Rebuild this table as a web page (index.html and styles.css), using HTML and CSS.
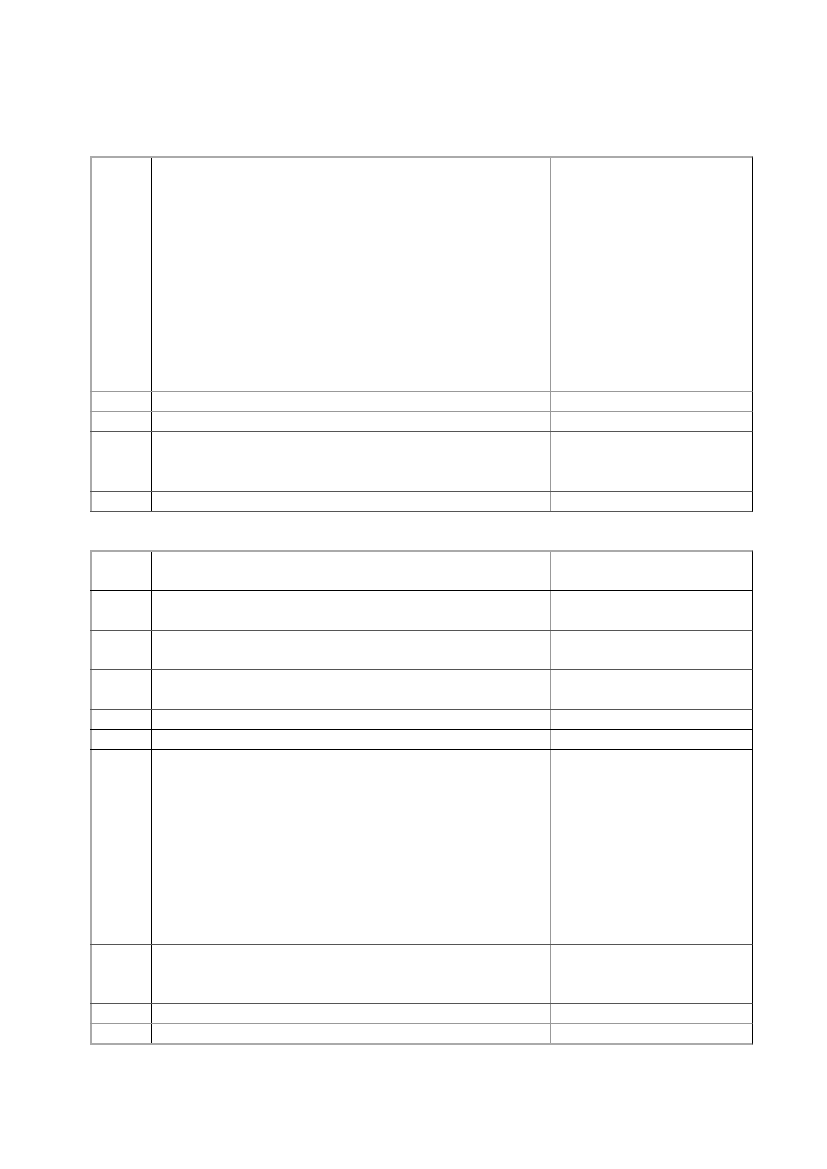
FILE: index.html
```html
<!DOCTYPE html>
<html>
<head>
<meta charset="utf-8">
<link rel="stylesheet" href="styles.css">
</head>
<body>
<div class="page">
  <div class="tbl">
    <div class="row first h233"><div class="c1"></div><div class="c2"></div><div class="c3"></div></div>
    <div class="row t-mid h19"><div class="c1"></div><div class="c2"></div><div class="c3"></div></div>
    <div class="row t-mid h19"><div class="c1"></div><div class="c2"></div><div class="c3"></div></div>
    <div class="row t-dark h59"><div class="c1"></div><div class="c2"></div><div class="c3"></div></div>
    <div class="row t-dark h19 b-dark"><div class="c1"></div><div class="c2"></div><div class="c3"></div></div>
  </div>
  <div class="tbl second">
    <div class="row first h38"><div class="c1"></div><div class="c2"></div><div class="c3"></div></div>
    <div class="row t-black h39"><div class="c1"></div><div class="c2"></div><div class="c3"></div></div>
    <div class="row t-dark h38"><div class="c1"></div><div class="c2"></div><div class="c3"></div></div>
    <div class="row t-dark h39"><div class="c1"></div><div class="c2"></div><div class="c3"></div></div>
    <div class="row t-dark h19"><div class="c1"></div><div class="c2"></div><div class="c3"></div></div>
    <div class="row t-black h19"><div class="c1"></div><div class="c2"></div><div class="c3"></div></div>
    <div class="row t-black h194"><div class="c1"></div><div class="c2"></div><div class="c3"></div></div>
    <div class="row t-dark h58"><div class="c1"></div><div class="c2"></div><div class="c3"></div></div>
    <div class="row t-dark h19"><div class="c1"></div><div class="c2"></div><div class="c3"></div></div>
    <div class="row t-mid h19 b-light"><div class="c1"></div><div class="c2"></div><div class="c3"></div></div>
  </div>
</div>
</body>
</html>
```
FILE: styles.css
```css
html, body {
  margin: 0;
  padding: 0;
  background: #ffffff;
  font-family: "Liberation Sans", Arial, sans-serif;
}
.page {
  width: 827px;
  height: 1169px;
  padding: 156px 0 0 90px;
  box-sizing: border-box;
}
.tbl {
  width: 663px;
  display: flex;
  flex-direction: column;
}
.tbl.second {
  margin-top: 38px;
}
.row {
  display: grid;
  grid-template-columns: 61px 399px 1fr;
  border-top: 1px solid #999;
  border-right: 1px solid #000;
}
.c1 { border-left: 2px solid #aaa; }
.c2 { border-left: 1px solid #000; }
.c3 { border-left: 1px solid #999; }
.first { border-top: 2px solid #aaa; }
.t-mid { border-top-color: #999; }
.t-dark { border-top-color: #555; }
.t-black { border-top-color: #000; }
.b-dark { border-bottom: 1px solid #555; }
.b-light { border-bottom: 2px solid #aaa; }
.h19 { height: 19px; }
.h38 { height: 38px; }
.h39 { height: 39px; }
.h58 { height: 58px; }
.h59 { height: 59px; }
.h194 { height: 194px; }
.h233 { height: 233px; }
```
